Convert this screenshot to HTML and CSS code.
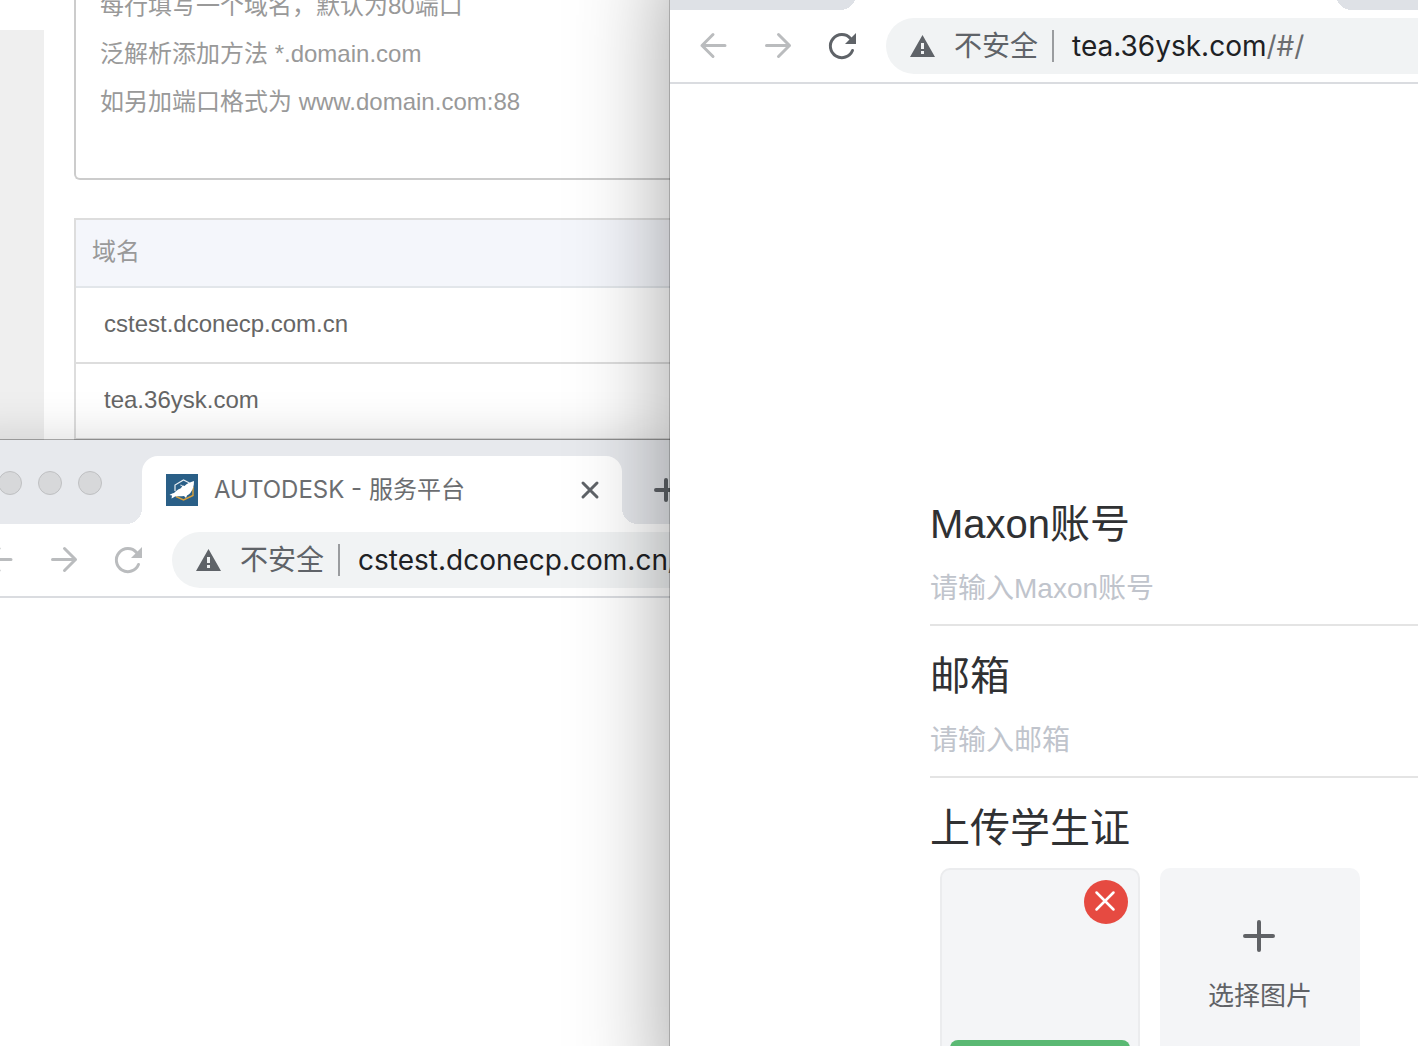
FILE: index.html
```html
<!DOCTYPE html>
<html lang="zh-CN">
<head>
  <meta charset="UTF-8"/>
  <meta name="viewport" content="width=device-width, initial-scale=1.0"/>
  <title>Maxon账号</title>
  <link rel="stylesheet" href="styles.css">
</head>
<body>

  <!-- shared toolbar icons -->
  <svg class="sprite" aria-hidden="true">
    <symbol id="icon-back" viewBox="0 0 32 32">
      <path d="M27 15.500H4M15 4.500l-11 11 11 11" fill="none" stroke="currentColor" stroke-width="3" stroke-linecap="round" stroke-linejoin="round"/>
    </symbol>
    <symbol id="icon-forward" viewBox="0 0 32 32">
      <path d="M4.500 15.500h23M16.500 4.500l11 11-11 11" fill="none" stroke="currentColor" stroke-width="3" stroke-linecap="round" stroke-linejoin="round"/>
    </symbol>
    <symbol id="icon-reload" viewBox="0 0 32 32">
      <path d="M26.5 20.500A11.500 11.500 0 1 1 24.500 8.500" fill="none" stroke="currentColor" stroke-width="3" stroke-linecap="round"/>
      <path d="M30 3v11H19z" fill="currentColor"/>
    </symbol>
    <symbol id="icon-warning" viewBox="0 0 26 24">
      <path d="M12.500 1L25 23H0zM11 9v6h3V9zM11 17v3h3v-3z" fill="currentColor" fill-rule="evenodd"/>
    </symbol>
  </svg>

  <div class="desktop">
    <div class="left-side">

      <!-- Domain settings -->
      <section class="domain-panel">
        <div class="side-menu"></div>
        <div class="domain-content">
          <textarea class="domain-input" aria-label="域名" placeholder="每行填写一个域名，默认为80端口&#10;泛解析添加方法 *.domain.com&#10;如另加端口格式为 www.domain.com:88"></textarea>
          <table class="domain-table">
            <thead>
              <tr><th>域名</th></tr>
            </thead>
            <tbody>
              <tr><td>cstest.dconecp.com.cn</td></tr>
              <tr><td>tea.36ysk.com</td></tr>
            </tbody>
          </table>
        </div>
      </section>

      <!-- Browser: cstest -->
      <section class="browser browser-back">
        <div class="tab-strip">
          <div class="lights"><span></span><span></span><span></span></div>
          <div class="tab">
            <svg class="favicon" viewBox="0 0 32 32">
              <rect width="32" height="32" fill="#2a5f87"/>
              <path d="M9 17v-6l8.500-5 6 3" fill="none" stroke="#e8eef2" stroke-width="1.200"/>
              <path d="M27 13v8.500L17.500 26 10 22.500" fill="none" stroke="#d9a13b" stroke-width="1.400"/>
              <path d="M28 7c0 5-1 8-3 11-1 2-3 3-4 3.500l-1 2.500-2-2c-3 .5-6 0-9 .5-1 .5-2 1.500-3.500 2l.5-3-2.500-.5c1.500-1.500 3-1.500 4.500-2 2-2 4-4 7-5l-.5-3.500 4 1.500C21 9 24 8.500 28 7z" fill="#fff"/>
              <path d="M13 13l4-2-2 3-3 1z" fill="#2a5f87"/>
            </svg>
            <span class="tab-title">AUTODESK - 服务平台</span>
            <button class="tab-close" aria-label="关闭标签页">
              <svg viewBox="0 0 20 20"><path d="M3 3l14 14M17 3L3 17" stroke="currentColor" stroke-width="3" stroke-linecap="round"/></svg>
            </button>
          </div>
          <button class="tab-new" aria-label="新标签页">
            <svg viewBox="0 0 24 24"><path d="M12 2v20M2 12h20" stroke="currentColor" stroke-width="4" stroke-linecap="round"/></svg>
          </button>
        </div>
        <div class="toolbar">
          <button class="nav-btn" aria-label="后退"><svg><use href="#icon-back"/></svg></button>
          <button class="nav-btn" aria-label="前进"><svg><use href="#icon-forward"/></svg></button>
          <button class="nav-btn" aria-label="刷新"><svg><use href="#icon-reload"/></svg></button>
          <div class="address">
            <svg class="warning"><use href="#icon-warning"/></svg>
            <span class="unsafe">不安全</span>
            <span class="url">cstest.dconecp.com.cn<span class="path">/</span></span>
          </div>
        </div>
      </section>
    </div>

    <!-- Browser: tea -->
    <section class="browser browser-front">
      <div class="tab-strip">
        <div class="lights"></div>
        <div class="tab"></div>
      </div>
      <div class="toolbar">
        <button class="nav-btn" aria-label="后退"><svg><use href="#icon-back"/></svg></button>
        <button class="nav-btn" aria-label="前进"><svg><use href="#icon-forward"/></svg></button>
        <button class="nav-btn active" aria-label="刷新"><svg><use href="#icon-reload"/></svg></button>
        <div class="address">
          <svg class="warning"><use href="#icon-warning"/></svg>
          <span class="unsafe">不安全</span>
          <span class="url">tea.36ysk.com<span class="path">/#/</span></span>
        </div>
      </div>

      <form class="account-form">
        <label for="account">Maxon账号</label>
        <input type="text" id="account" placeholder="请输入Maxon账号">
        <label for="email">邮箱</label>
        <input type="text" id="email" placeholder="请输入邮箱">
        <h2>上传学生证</h2>
        <div class="upload-list">
          <div class="upload-item">
            <button type="button" class="upload-delete" aria-label="删除">
              <svg viewBox="0 0 22 22"><path d="M1.500 1.500l17 17M18.500 1.500l-17 17" stroke="#fff" stroke-width="2.500" stroke-linecap="round"/></svg>
            </button>
            <div class="upload-progress"></div>
          </div>
          <button type="button" class="upload-add">
            <svg viewBox="0 0 32 32"><path d="M15 2v28M1 16h28" stroke="currentColor" stroke-width="4" stroke-linecap="round"/></svg>
            <span>选择图片</span>
          </button>
        </div>
      </form>
    </section>
  </div>

</body>
</html>
```
FILE: styles.css
```css
* {
  margin: 0;
  padding: 0;
  box-sizing: border-box;
}

body {
  background: #fff;
  font-family: "Liberation Sans", "Noto Sans CJK SC", sans-serif;
  overflow: hidden;
}

button {
  border: none;
  background: none;
  font-family: inherit;
  cursor: pointer;
}

svg {
  display: block;
  overflow: visible;
}

.sprite {
  display: none;
}

.desktop {
  display: grid;
  grid-template-columns: 670px 1fr;
  height: 100vh;
  overflow: hidden;
}

.left-side {
  display: flex;
  flex-direction: column;
  min-width: 0;
  overflow: hidden;
}

/* Domain settings */
.domain-panel {
  display: flex;
  gap: 30px;
  height: 440px;
  flex-shrink: 0;
}

.side-menu {
  width: 44px;
  margin-top: 30px;
  background: #efefef;
}

.domain-content {
  flex: 1;
  margin-top: -32px;
}

.domain-input {
  display: block;
  width: 100%;
  height: 212px;
  padding: 12px 24px;
  border: 2px solid #ccc;
  border-right: none;
  border-radius: 6px 0 0 6px;
  outline: none;
  resize: none;
  overflow: hidden;
  font-family: inherit;
  font-size: 24px;
  line-height: 48px;
}

.domain-input::placeholder {
  color: #999;
}

.domain-table {
  width: 100%;
  margin-top: 38px;
  border: 2px solid #ddd;
  border-width: 2px 0 0 2px;
  border-spacing: 0;
  font-size: 24px;
  line-height: 36px;
  text-align: left;
}

.domain-table th {
  height: 68px;
  padding: 0 16px 2px;
  background: #f4f6fb;
  border-bottom: 2px solid #e2e6ea;
  color: #999;
  font-weight: normal;
}

.domain-table td {
  height: 76px;
  padding: 0 28px 2px;
  border-bottom: 2px solid #ddd;
  color: #666;
}

/* Browser windows */
.browser {
  position: relative;
  min-width: 0;
  background: #fff;
  font-family: Inter, "Noto Sans CJK SC", sans-serif;
}

.browser-back {
  flex: 1;
  margin-left: -44px;
  box-shadow: 0 0 0 1px rgba(0, 0, 0, 0.3), 0 0 48px rgba(0, 0, 0, 0.16);
}

.browser-front {
  margin-top: -74px;
  z-index: 2;
  box-shadow: 0 0 0 1px rgba(0, 0, 0, 0.2), 0 30px 90px rgba(0, 0, 0, 0.38);
}

.tab-strip {
  display: flex;
  height: 84px;
  padding-top: 16px;
  background: #e7e9ed;
  overflow: hidden;
}

.browser-front .tab-strip {
  background: #dee1e6;
}

.lights {
  display: flex;
  gap: 16px;
  flex-shrink: 0;
  width: 186px;
  padding: 15px 0 0 42px;
}

.lights span {
  width: 24px;
  height: 24px;
  border: 1px solid #bfc0c2;
  border-radius: 50%;
  background: #d7d8da;
}

.tab {
  position: relative;
  display: flex;
  align-items: center;
  flex-shrink: 0;
  width: 480px;
  padding: 0 20px 0 24px;
  border-radius: 16px 16px 0 0;
  background: #fff;
}

.tab::before,
.tab::after {
  content: "";
  position: absolute;
  bottom: 0;
  width: 16px;
  height: 16px;
}

.tab::before {
  right: 100%;
  background: radial-gradient(circle at 0 0, transparent 16px, #fff 16px);
}

.tab::after {
  left: 100%;
  background: radial-gradient(circle at 100% 0, transparent 16px, #fff 16px);
}

.favicon {
  width: 32px;
  height: 32px;
  margin-right: 16px;
}

.tab-title {
  flex: 1;
  color: #6b6d70;
  font-size: 24px;
  line-height: 32px;
}

.tab-close {
  width: 24px;
  height: 24px;
  padding: 2px;
  color: #5f6368;
}

.tab-new {
  flex-shrink: 0;
  width: 24px;
  margin-left: 32px;
  color: #5f6368;
}

.toolbar {
  display: flex;
  align-items: center;
  gap: 32px;
  height: 74px;
  padding-left: 28px;
  border-bottom: 2px solid #dadce0;
}

.nav-btn {
  flex-shrink: 0;
  width: 32px;
  height: 32px;
  color: #babcbe;
}

.nav-btn.active {
  color: #5f6368;
}

.nav-btn svg {
  width: 32px;
  height: 32px;
}

.address {
  display: flex;
  align-items: center;
  flex: 1;
  min-width: 0;
  height: 56px;
  margin-left: -4px;
  padding-left: 24px;
  border-radius: 28px 0 0 28px;
  background: #f1f3f4;
  font-size: 28px;
  line-height: 32px;
  white-space: nowrap;
}

.warning {
  flex-shrink: 0;
  width: 26px;
  height: 24px;
  margin-right: 18px;
  color: #5f6368;
}

.unsafe {
  padding-right: 14px;
  border-right: 2px solid #9a9c9f;
  color: #5f6368;
}

.url {
  padding-left: 18px;
  color: #202124;
}

.path {
  color: #6b6d70;
}

/* Account form */
.account-form {
  padding: 412px 0 0 260px;
  font-family: "Liberation Sans", "Noto Sans CJK SC", sans-serif;
}

.account-form label,
.account-form h2 {
  display: block;
  color: #303133;
  font-size: 40px;
  font-weight: normal;
  line-height: 56px;
}

.account-form input {
  display: block;
  width: 100%;
  height: 74px;
  margin-bottom: 22px;
  padding-top: 2px;
  border: none;
  border-bottom: 2px solid #e4e4e4;
  outline: none;
  font-family: inherit;
  font-size: 28px;
}

.account-form input::placeholder {
  color: #c0c4cc;
}

.upload-list {
  display: flex;
  gap: 20px;
  padding: 12px 10px;
}

.upload-item,
.upload-add {
  display: flex;
  flex-direction: column;
  width: 200px;
  height: 200px;
  border-radius: 10px;
  background: #f4f5f7;
}

.upload-item {
  justify-content: space-between;
  padding: 10px 8px;
  border: 2px solid #ebecee;
}

.upload-delete {
  display: flex;
  align-items: center;
  justify-content: center;
  align-self: flex-end;
  width: 44px;
  height: 44px;
  margin-right: 2px;
  border-radius: 50%;
  background: #e64a41;
}

.upload-delete svg {
  width: 22px;
  height: 22px;
}

.upload-progress {
  height: 16px;
  border-radius: 8px;
  background: #5ab973;
}

.upload-add {
  align-items: center;
  justify-content: center;
  gap: 24px;
  color: #606266;
  font-size: 26px;
  line-height: 40px;
}

.upload-add svg {
  width: 32px;
  height: 32px;
}
```
